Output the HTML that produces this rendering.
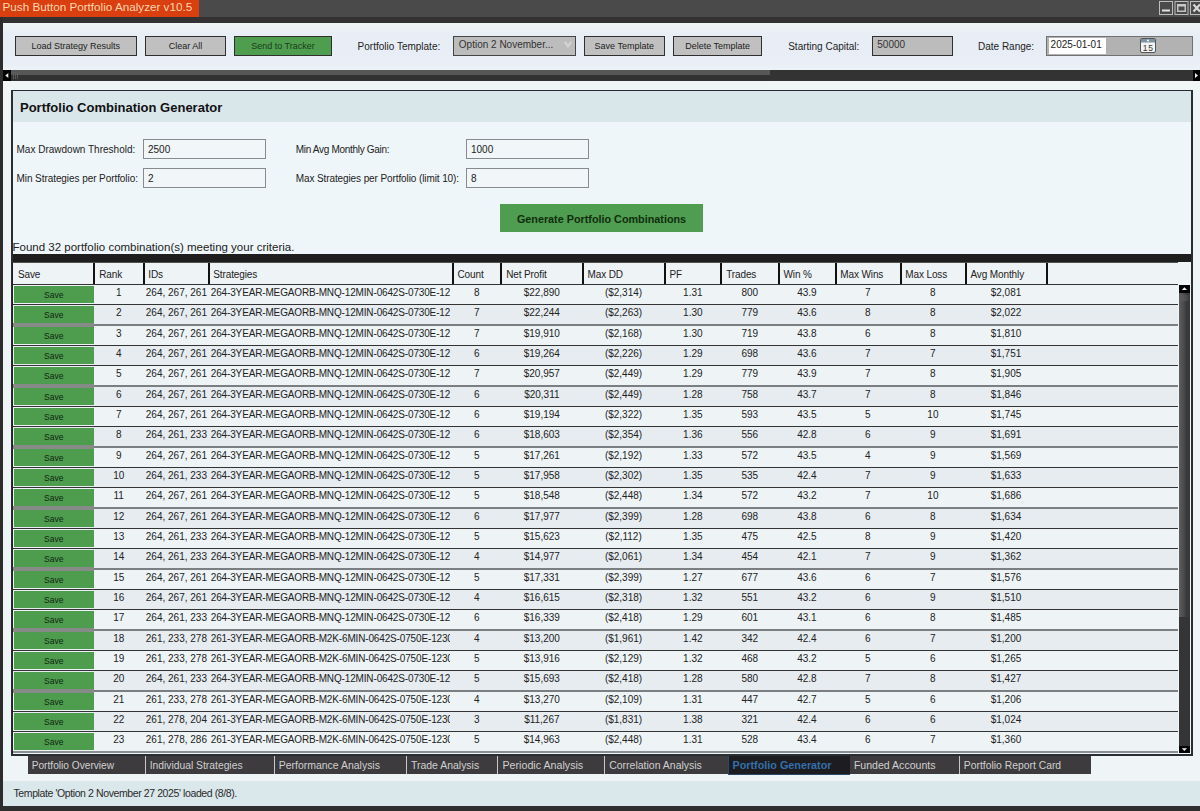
<!DOCTYPE html><html><head><meta charset="utf-8"><style>*{margin:0;padding:0;box-sizing:border-box}
html,body{width:1200px;height:811px;overflow:hidden;background:#eef4f6}
body{font-family:"Liberation Sans",sans-serif;color:#222}
#root{position:relative;width:1200px;height:811px;overflow:hidden;background:#eff5f6}
.a{position:absolute;white-space:nowrap}
#titlebar{position:absolute;left:0;top:0;width:1200px;height:17px;background:#4a4a4a}
#apptitle{position:absolute;left:0;top:0;width:199px;height:17px;background:#da3f10;color:#ffd5ae;font-size:11.7px;line-height:14.5px;padding-left:2.5px;white-space:nowrap}
#tband{position:absolute;left:0;top:17px;width:1200px;height:5.5px;background:#343133}
.wb{position:absolute;top:1.5px;width:13.5px;height:13.5px;border:1.5px solid #c8c8c8}
#lborder{position:absolute;left:0;top:17px;width:2.5px;height:794px;background:#2c2c2c}
#bborder{position:absolute;left:0;top:805.5px;width:1200px;height:6px;background:#2e2e2e}
.btn{position:absolute;top:36px;height:20px;background:#c0c0c0;border:1.5px solid #2f2f2f;font-size:9px;color:#222;text-align:center;line-height:19.5px;white-space:nowrap}
.btn.g{background:#4f9e4f;color:#1a3d1a}
.lbl{position:absolute;font-size:10px;color:#222;white-space:nowrap}
.hs{position:absolute;top:70px;height:10.8px;background:#333}
#panel{position:absolute;left:11px;top:89.5px;width:181.5px;height:666px;border:1.5px solid #2e2e2e}
.inp{position:absolute;height:20px;border:1.5px solid #858b8e;background:#f1f6f8;font-size:10px;line-height:19px;padding-left:4px;color:#222}
.thead{position:absolute;left:12.5px;top:263px;width:1178.5px;height:21.4px;background:#eef3f6}
.th{position:absolute;top:5.7px;font-size:10px;color:#222;white-space:nowrap;letter-spacing:-0.12px}
.vd{position:absolute;top:0;width:1.5px;height:21px;background:#111}
.thead .th,.thead .vd{margin-left:-12.5px}
.row{position:absolute;left:13px;width:1165px;height:19.33px;overflow:hidden}
.odd{background:#eef4f6}
.even{background:#e6ecf0}
.sv{position:absolute;left:1px;top:1px;width:79.5px;height:17px;background:#4e9c4e;color:#102810;font-weight:normal;font-size:8.5px;text-align:center;line-height:18px}
.td{position:absolute;top:2.1px;font-size:10px;color:#222;white-space:nowrap;overflow:hidden;line-height:12px;margin-left:-13px}
.td.c{text-align:center}
.hl{position:absolute;left:13px;width:1165px;height:1px;background:#333}
.tab{position:absolute;top:755.5px;height:18px;background:#3d3b3e;color:#d0d0d0;font-size:10.3px;line-height:19px;padding-left:5px;white-space:nowrap;border-left:1px solid #c8c8c8}
.tab.act{background:#1d1c20;color:#3470aa;font-weight:bold;font-size:10.8px;line-height:19px;height:19.5px;border-left:1px solid #2b4a6b;border-bottom:1px solid #2b4a6b}
.st{letter-spacing:-0.15px}
</style></head><body><div id="root"><div id="titlebar"></div>
<div id="apptitle">Push Button Portfolio Analyzer v10.5</div>
<svg class="a" style="left:1155px;top:0" width="45" height="17" viewBox="0 0 45 17">
<rect x="4.5" y="1.5" width="13" height="13" fill="none" stroke="#bdbdbd" stroke-width="1"/>
<rect x="7" y="9.5" width="8" height="2" fill="#e0e0e0"/>
<rect x="20" y="1.5" width="13" height="13" fill="none" stroke="#bdbdbd" stroke-width="1"/>
<rect x="22.75" y="4.75" width="7.5" height="6.5" fill="none" stroke="#c0c0c0" stroke-width="1.5"/>
<rect x="22" y="4" width="9" height="2.5" fill="#c8c8c8"/>
<rect x="35.5" y="1.5" width="13" height="13" fill="none" stroke="#bdbdbd" stroke-width="1"/>
<path d="M38.5 4.5 L45 11.5 M38.5 11.5 L45 4.5" stroke="#d8d8d8" stroke-width="2.2"/>
</svg>
<div id="tband"></div><div class="a" style="left:2.5px;top:22.5px;width:1197.5px;height:47.5px;background:linear-gradient(#f0f6f5 0px,#e8eef5 10px,#e8edf6 38px,#eef3f8 47px)"></div>
<div class="btn" style="left:14.6px;width:122.4px">Load Strategy Results</div>
<div class="btn" style="left:145px;width:81px">Clear All</div>
<div class="btn g" style="left:234px;width:98px">Send to Tracker</div>
<div class="lbl" style="left:357.6px;top:41px">Portfolio Template:</div>
<div class="btn" style="left:453.3px;width:122.5px;text-align:left;padding-left:4.5px;font-size:10px;line-height:15px;color:#333;top:35.8px;height:20px;border-color:#444;background:#bcbcbc">Option 2 November...</div><svg class="a" style="left:563px;top:39px" width="10" height="10"><path d="M1.8 2.8 L5 7.2 L8.2 2.8" fill="none" stroke="#d4d4d4" stroke-width="2"/></svg>
<div class="btn" style="left:584px;width:80.6px">Save Template</div>
<div class="btn" style="left:673px;width:89.4px">Delete Template</div>
<div class="lbl" style="left:788.2px;top:41px">Starting Capital:</div>
<div class="btn" style="left:871.8px;width:81.4px;text-align:left;padding-left:4.5px;font-size:10px;line-height:15px;color:#333;background:#bcbcbc">50000</div>
<div class="lbl" style="left:978px;top:41px">Date Range:</div>
<div class="a" style="left:1046px;top:36px;width:146.6px;height:19.6px;background:#b2b2b2;border:1px solid #707070"></div>
<div class="a" style="left:1048.6px;top:37.6px;width:57.4px;height:16px;background:#fff;font-size:10px;line-height:14px;padding-left:2px;color:#222">2025-01-01</div>
<svg class="a" style="left:1140px;top:38px" width="16" height="15" viewBox="0 0 16 15"><rect x="0.5" y="0.5" width="15" height="14" rx="1.5" fill="#f4f4f4" stroke="#555"/><rect x="1" y="1" width="14" height="3.5" fill="#7d93a3"/><circle cx="8" cy="2.5" r="1" fill="#fff"/><text x="8.2" y="12.6" font-family="Liberation Sans" font-size="8.5" text-anchor="middle" fill="#333" letter-spacing="0.6">15</text></svg>
<div class="hs" style="left:2.5px;width:1197.5px"></div>
<div class="a" style="left:11px;top:70px;width:759px;height:5.4px;background:#575757"></div>
<div class="a" style="left:11px;top:75.4px;width:759px;height:5.4px;background:#323232"></div>
<svg class="a" style="left:3px;top:70px" width="8" height="11"><rect width="8" height="11" fill="#000"/><path d="M2.3 5.5 L5.3 3 L5.3 8 Z" fill="#eee"/></svg><svg class="a" style="left:12px;top:71px" width="8" height="9"><path d="M1.5 1V8M3.5 1V8M5.5 1V8" stroke="#626262" stroke-width="0.8"/></svg>
<svg class="a" style="left:1192.8px;top:70px" width="7.2" height="11"><rect width="8" height="11" fill="#000"/><path d="M5 5.5 L2 3 L2 8 Z" fill="#eee"/></svg>
<div class="a" style="left:2.5px;top:80.8px;width:1197.5px;height:9px;background:#f0f6f6"></div>
<div class="a" style="left:11px;top:89.5px;width:1181.5px;height:666.5px;border:2px solid #2a2e33;background:#eff6f9"></div>
<div class="a" style="left:12.5px;top:91px;width:1178.5px;height:31px;background:#d9e7eb"></div>
<div class="a" style="left:20px;top:99.5px;font-size:13px;font-weight:bold;color:#111">Portfolio Combination Generator</div>
<div class="lbl" style="left:16.5px;top:144px">Max Drawdown Threshold:</div>
<div class="lbl" style="left:16.5px;top:173px;letter-spacing:-0.07px">Min Strategies per Portfolio:</div>
<div class="inp" style="left:143px;top:139.2px;width:123px">2500</div>
<div class="inp" style="left:143px;top:167.5px;width:123px">2</div>
<div class="lbl" style="left:295.7px;top:144px;letter-spacing:-0.3px">Min Avg Monthly Gain:</div>
<div class="lbl" style="left:295.7px;top:173px;letter-spacing:-0.1px">Max Strategies per Portfolio (limit 10):</div>
<div class="inp" style="left:466px;top:139.3px;width:122.7px">1000</div>
<div class="inp" style="left:466px;top:167.7px;width:122.7px">8</div>
<div class="a" style="left:500px;top:204px;width:203px;height:28.4px;background:#4f9d50;color:#0f2e0f;font-weight:bold;font-size:10.8px;line-height:30.5px;text-align:center">Generate Portfolio Combinations</div>
<div class="a" style="left:12.5px;top:241px;font-size:11.5px;color:#222">Found 32 portfolio combination(s) meeting your criteria.</div>
<div class="a" style="left:12.5px;top:254px;width:1178.5px;height:8px;background:#1e1e1e"></div>
<div class="a" style="left:12.5px;top:262px;width:1165.5px;height:1px;background:#505050"></div>
<div class="a" style="left:11.5px;top:263px;width:1.5px;height:491px;background:#222"></div>
<div class="thead"><span class="th" style="left:18.0px">Save</span><span class="th" style="left:99.2px">Rank</span><span class="th" style="left:148.3px">IDs</span><span class="th" style="left:213.3px">Strategies</span><span class="th" style="left:457.5px">Count</span><span class="th" style="left:506.2px">Net Profit</span><span class="th" style="left:587.5px">Max DD</span><span class="th" style="left:669.5px">PF</span><span class="th" style="left:726.2px">Trades</span><span class="th" style="left:783.5px">Win %</span><span class="th" style="left:840.3px">Max Wins</span><span class="th" style="left:905.3px">Max Loss</span><span class="th" style="left:970.5px">Avg Monthly</span><i class="vd" style="left:93px"></i><i class="vd" style="left:143px"></i><i class="vd" style="left:208px"></i><i class="vd" style="left:452px"></i><i class="vd" style="left:500px"></i><i class="vd" style="left:582px"></i><i class="vd" style="left:664px"></i><i class="vd" style="left:720px"></i><i class="vd" style="left:778px"></i><i class="vd" style="left:835px"></i><i class="vd" style="left:900px"></i><i class="vd" style="left:965px"></i><i class="vd" style="left:1046px"></i></div><div class="row odd" style="top:284.90px"><b class="sv">Save</b><span class="td c" style="left:94.2px;width:49.1px">1</span><span class="td l" style="left:145.8px;width:62.0px">264, 267, 261</span><span class="td l st" style="left:210.8px;width:239.5px">264-3YEAR-MEGAORB-MNQ-12MIN-0642S-0730E-12</span><span class="td c" style="left:452.5px;width:48.7px">8</span><span class="td c" style="left:501.2px;width:81.3px">$22,890</span><span class="td c" style="left:582.5px;width:82.0px">($2,314)</span><span class="td c" style="left:664.5px;width:56.7px">1.31</span><span class="td c" style="left:721.2px;width:57.3px">800</span><span class="td c" style="left:778.5px;width:56.8px">43.9</span><span class="td c" style="left:835.3px;width:65.0px">7</span><span class="td c" style="left:900.3px;width:65.2px">8</span><span class="td c" style="left:965.5px;width:81.0px">$2,081</span></div><div class="row even" style="top:305.23px"><b class="sv">Save</b><span class="td c" style="left:94.2px;width:49.1px">2</span><span class="td l" style="left:145.8px;width:62.0px">264, 267, 261</span><span class="td l st" style="left:210.8px;width:239.5px">264-3YEAR-MEGAORB-MNQ-12MIN-0642S-0730E-12</span><span class="td c" style="left:452.5px;width:48.7px">7</span><span class="td c" style="left:501.2px;width:81.3px">$22,244</span><span class="td c" style="left:582.5px;width:82.0px">($2,263)</span><span class="td c" style="left:664.5px;width:56.7px">1.30</span><span class="td c" style="left:721.2px;width:57.3px">779</span><span class="td c" style="left:778.5px;width:56.8px">43.6</span><span class="td c" style="left:835.3px;width:65.0px">8</span><span class="td c" style="left:900.3px;width:65.2px">8</span><span class="td c" style="left:965.5px;width:81.0px">$2,022</span></div><div class="row odd" style="top:325.57px"><b class="sv">Save</b><span class="td c" style="left:94.2px;width:49.1px">3</span><span class="td l" style="left:145.8px;width:62.0px">264, 267, 261</span><span class="td l st" style="left:210.8px;width:239.5px">264-3YEAR-MEGAORB-MNQ-12MIN-0642S-0730E-12</span><span class="td c" style="left:452.5px;width:48.7px">7</span><span class="td c" style="left:501.2px;width:81.3px">$19,910</span><span class="td c" style="left:582.5px;width:82.0px">($2,168)</span><span class="td c" style="left:664.5px;width:56.7px">1.30</span><span class="td c" style="left:721.2px;width:57.3px">719</span><span class="td c" style="left:778.5px;width:56.8px">43.8</span><span class="td c" style="left:835.3px;width:65.0px">6</span><span class="td c" style="left:900.3px;width:65.2px">8</span><span class="td c" style="left:965.5px;width:81.0px">$1,810</span></div><div class="row even" style="top:345.90px"><b class="sv">Save</b><span class="td c" style="left:94.2px;width:49.1px">4</span><span class="td l" style="left:145.8px;width:62.0px">264, 267, 261</span><span class="td l st" style="left:210.8px;width:239.5px">264-3YEAR-MEGAORB-MNQ-12MIN-0642S-0730E-12</span><span class="td c" style="left:452.5px;width:48.7px">6</span><span class="td c" style="left:501.2px;width:81.3px">$19,264</span><span class="td c" style="left:582.5px;width:82.0px">($2,226)</span><span class="td c" style="left:664.5px;width:56.7px">1.29</span><span class="td c" style="left:721.2px;width:57.3px">698</span><span class="td c" style="left:778.5px;width:56.8px">43.6</span><span class="td c" style="left:835.3px;width:65.0px">7</span><span class="td c" style="left:900.3px;width:65.2px">7</span><span class="td c" style="left:965.5px;width:81.0px">$1,751</span></div><div class="row odd" style="top:366.23px"><b class="sv">Save</b><span class="td c" style="left:94.2px;width:49.1px">5</span><span class="td l" style="left:145.8px;width:62.0px">264, 267, 261</span><span class="td l st" style="left:210.8px;width:239.5px">264-3YEAR-MEGAORB-MNQ-12MIN-0642S-0730E-12</span><span class="td c" style="left:452.5px;width:48.7px">7</span><span class="td c" style="left:501.2px;width:81.3px">$20,957</span><span class="td c" style="left:582.5px;width:82.0px">($2,449)</span><span class="td c" style="left:664.5px;width:56.7px">1.29</span><span class="td c" style="left:721.2px;width:57.3px">779</span><span class="td c" style="left:778.5px;width:56.8px">43.9</span><span class="td c" style="left:835.3px;width:65.0px">7</span><span class="td c" style="left:900.3px;width:65.2px">8</span><span class="td c" style="left:965.5px;width:81.0px">$1,905</span></div><div class="row even" style="top:386.56px"><b class="sv">Save</b><span class="td c" style="left:94.2px;width:49.1px">6</span><span class="td l" style="left:145.8px;width:62.0px">264, 267, 261</span><span class="td l st" style="left:210.8px;width:239.5px">264-3YEAR-MEGAORB-MNQ-12MIN-0642S-0730E-12</span><span class="td c" style="left:452.5px;width:48.7px">6</span><span class="td c" style="left:501.2px;width:81.3px">$20,311</span><span class="td c" style="left:582.5px;width:82.0px">($2,449)</span><span class="td c" style="left:664.5px;width:56.7px">1.28</span><span class="td c" style="left:721.2px;width:57.3px">758</span><span class="td c" style="left:778.5px;width:56.8px">43.7</span><span class="td c" style="left:835.3px;width:65.0px">7</span><span class="td c" style="left:900.3px;width:65.2px">8</span><span class="td c" style="left:965.5px;width:81.0px">$1,846</span></div><div class="row odd" style="top:406.90px"><b class="sv">Save</b><span class="td c" style="left:94.2px;width:49.1px">7</span><span class="td l" style="left:145.8px;width:62.0px">264, 267, 261</span><span class="td l st" style="left:210.8px;width:239.5px">264-3YEAR-MEGAORB-MNQ-12MIN-0642S-0730E-12</span><span class="td c" style="left:452.5px;width:48.7px">6</span><span class="td c" style="left:501.2px;width:81.3px">$19,194</span><span class="td c" style="left:582.5px;width:82.0px">($2,322)</span><span class="td c" style="left:664.5px;width:56.7px">1.35</span><span class="td c" style="left:721.2px;width:57.3px">593</span><span class="td c" style="left:778.5px;width:56.8px">43.5</span><span class="td c" style="left:835.3px;width:65.0px">5</span><span class="td c" style="left:900.3px;width:65.2px">10</span><span class="td c" style="left:965.5px;width:81.0px">$1,745</span></div><div class="row even" style="top:427.23px"><b class="sv">Save</b><span class="td c" style="left:94.2px;width:49.1px">8</span><span class="td l" style="left:145.8px;width:62.0px">264, 261, 233</span><span class="td l st" style="left:210.8px;width:239.5px">264-3YEAR-MEGAORB-MNQ-12MIN-0642S-0730E-12</span><span class="td c" style="left:452.5px;width:48.7px">6</span><span class="td c" style="left:501.2px;width:81.3px">$18,603</span><span class="td c" style="left:582.5px;width:82.0px">($2,354)</span><span class="td c" style="left:664.5px;width:56.7px">1.36</span><span class="td c" style="left:721.2px;width:57.3px">556</span><span class="td c" style="left:778.5px;width:56.8px">42.8</span><span class="td c" style="left:835.3px;width:65.0px">6</span><span class="td c" style="left:900.3px;width:65.2px">9</span><span class="td c" style="left:965.5px;width:81.0px">$1,691</span></div><div class="row odd" style="top:447.56px"><b class="sv">Save</b><span class="td c" style="left:94.2px;width:49.1px">9</span><span class="td l" style="left:145.8px;width:62.0px">264, 267, 261</span><span class="td l st" style="left:210.8px;width:239.5px">264-3YEAR-MEGAORB-MNQ-12MIN-0642S-0730E-12</span><span class="td c" style="left:452.5px;width:48.7px">5</span><span class="td c" style="left:501.2px;width:81.3px">$17,261</span><span class="td c" style="left:582.5px;width:82.0px">($2,192)</span><span class="td c" style="left:664.5px;width:56.7px">1.33</span><span class="td c" style="left:721.2px;width:57.3px">572</span><span class="td c" style="left:778.5px;width:56.8px">43.5</span><span class="td c" style="left:835.3px;width:65.0px">4</span><span class="td c" style="left:900.3px;width:65.2px">9</span><span class="td c" style="left:965.5px;width:81.0px">$1,569</span></div><div class="row even" style="top:467.90px"><b class="sv">Save</b><span class="td c" style="left:94.2px;width:49.1px">10</span><span class="td l" style="left:145.8px;width:62.0px">264, 261, 233</span><span class="td l st" style="left:210.8px;width:239.5px">264-3YEAR-MEGAORB-MNQ-12MIN-0642S-0730E-12</span><span class="td c" style="left:452.5px;width:48.7px">5</span><span class="td c" style="left:501.2px;width:81.3px">$17,958</span><span class="td c" style="left:582.5px;width:82.0px">($2,302)</span><span class="td c" style="left:664.5px;width:56.7px">1.35</span><span class="td c" style="left:721.2px;width:57.3px">535</span><span class="td c" style="left:778.5px;width:56.8px">42.4</span><span class="td c" style="left:835.3px;width:65.0px">7</span><span class="td c" style="left:900.3px;width:65.2px">9</span><span class="td c" style="left:965.5px;width:81.0px">$1,633</span></div><div class="row odd" style="top:488.23px"><b class="sv">Save</b><span class="td c" style="left:94.2px;width:49.1px">11</span><span class="td l" style="left:145.8px;width:62.0px">264, 267, 261</span><span class="td l st" style="left:210.8px;width:239.5px">264-3YEAR-MEGAORB-MNQ-12MIN-0642S-0730E-12</span><span class="td c" style="left:452.5px;width:48.7px">5</span><span class="td c" style="left:501.2px;width:81.3px">$18,548</span><span class="td c" style="left:582.5px;width:82.0px">($2,448)</span><span class="td c" style="left:664.5px;width:56.7px">1.34</span><span class="td c" style="left:721.2px;width:57.3px">572</span><span class="td c" style="left:778.5px;width:56.8px">43.2</span><span class="td c" style="left:835.3px;width:65.0px">7</span><span class="td c" style="left:900.3px;width:65.2px">10</span><span class="td c" style="left:965.5px;width:81.0px">$1,686</span></div><div class="row even" style="top:508.56px"><b class="sv">Save</b><span class="td c" style="left:94.2px;width:49.1px">12</span><span class="td l" style="left:145.8px;width:62.0px">264, 267, 261</span><span class="td l st" style="left:210.8px;width:239.5px">264-3YEAR-MEGAORB-MNQ-12MIN-0642S-0730E-12</span><span class="td c" style="left:452.5px;width:48.7px">6</span><span class="td c" style="left:501.2px;width:81.3px">$17,977</span><span class="td c" style="left:582.5px;width:82.0px">($2,399)</span><span class="td c" style="left:664.5px;width:56.7px">1.28</span><span class="td c" style="left:721.2px;width:57.3px">698</span><span class="td c" style="left:778.5px;width:56.8px">43.8</span><span class="td c" style="left:835.3px;width:65.0px">6</span><span class="td c" style="left:900.3px;width:65.2px">8</span><span class="td c" style="left:965.5px;width:81.0px">$1,634</span></div><div class="row odd" style="top:528.90px"><b class="sv">Save</b><span class="td c" style="left:94.2px;width:49.1px">13</span><span class="td l" style="left:145.8px;width:62.0px">264, 261, 233</span><span class="td l st" style="left:210.8px;width:239.5px">264-3YEAR-MEGAORB-MNQ-12MIN-0642S-0730E-12</span><span class="td c" style="left:452.5px;width:48.7px">5</span><span class="td c" style="left:501.2px;width:81.3px">$15,623</span><span class="td c" style="left:582.5px;width:82.0px">($2,112)</span><span class="td c" style="left:664.5px;width:56.7px">1.35</span><span class="td c" style="left:721.2px;width:57.3px">475</span><span class="td c" style="left:778.5px;width:56.8px">42.5</span><span class="td c" style="left:835.3px;width:65.0px">8</span><span class="td c" style="left:900.3px;width:65.2px">9</span><span class="td c" style="left:965.5px;width:81.0px">$1,420</span></div><div class="row even" style="top:549.23px"><b class="sv">Save</b><span class="td c" style="left:94.2px;width:49.1px">14</span><span class="td l" style="left:145.8px;width:62.0px">264, 261, 233</span><span class="td l st" style="left:210.8px;width:239.5px">264-3YEAR-MEGAORB-MNQ-12MIN-0642S-0730E-12</span><span class="td c" style="left:452.5px;width:48.7px">4</span><span class="td c" style="left:501.2px;width:81.3px">$14,977</span><span class="td c" style="left:582.5px;width:82.0px">($2,061)</span><span class="td c" style="left:664.5px;width:56.7px">1.34</span><span class="td c" style="left:721.2px;width:57.3px">454</span><span class="td c" style="left:778.5px;width:56.8px">42.1</span><span class="td c" style="left:835.3px;width:65.0px">7</span><span class="td c" style="left:900.3px;width:65.2px">9</span><span class="td c" style="left:965.5px;width:81.0px">$1,362</span></div><div class="row odd" style="top:569.56px"><b class="sv">Save</b><span class="td c" style="left:94.2px;width:49.1px">15</span><span class="td l" style="left:145.8px;width:62.0px">264, 267, 261</span><span class="td l st" style="left:210.8px;width:239.5px">264-3YEAR-MEGAORB-MNQ-12MIN-0642S-0730E-12</span><span class="td c" style="left:452.5px;width:48.7px">5</span><span class="td c" style="left:501.2px;width:81.3px">$17,331</span><span class="td c" style="left:582.5px;width:82.0px">($2,399)</span><span class="td c" style="left:664.5px;width:56.7px">1.27</span><span class="td c" style="left:721.2px;width:57.3px">677</span><span class="td c" style="left:778.5px;width:56.8px">43.6</span><span class="td c" style="left:835.3px;width:65.0px">6</span><span class="td c" style="left:900.3px;width:65.2px">7</span><span class="td c" style="left:965.5px;width:81.0px">$1,576</span></div><div class="row even" style="top:589.89px"><b class="sv">Save</b><span class="td c" style="left:94.2px;width:49.1px">16</span><span class="td l" style="left:145.8px;width:62.0px">264, 267, 261</span><span class="td l st" style="left:210.8px;width:239.5px">264-3YEAR-MEGAORB-MNQ-12MIN-0642S-0730E-12</span><span class="td c" style="left:452.5px;width:48.7px">4</span><span class="td c" style="left:501.2px;width:81.3px">$16,615</span><span class="td c" style="left:582.5px;width:82.0px">($2,318)</span><span class="td c" style="left:664.5px;width:56.7px">1.32</span><span class="td c" style="left:721.2px;width:57.3px">551</span><span class="td c" style="left:778.5px;width:56.8px">43.2</span><span class="td c" style="left:835.3px;width:65.0px">6</span><span class="td c" style="left:900.3px;width:65.2px">9</span><span class="td c" style="left:965.5px;width:81.0px">$1,510</span></div><div class="row odd" style="top:610.23px"><b class="sv">Save</b><span class="td c" style="left:94.2px;width:49.1px">17</span><span class="td l" style="left:145.8px;width:62.0px">264, 261, 233</span><span class="td l st" style="left:210.8px;width:239.5px">264-3YEAR-MEGAORB-MNQ-12MIN-0642S-0730E-12</span><span class="td c" style="left:452.5px;width:48.7px">6</span><span class="td c" style="left:501.2px;width:81.3px">$16,339</span><span class="td c" style="left:582.5px;width:82.0px">($2,418)</span><span class="td c" style="left:664.5px;width:56.7px">1.29</span><span class="td c" style="left:721.2px;width:57.3px">601</span><span class="td c" style="left:778.5px;width:56.8px">43.1</span><span class="td c" style="left:835.3px;width:65.0px">6</span><span class="td c" style="left:900.3px;width:65.2px">8</span><span class="td c" style="left:965.5px;width:81.0px">$1,485</span></div><div class="row even" style="top:630.56px"><b class="sv">Save</b><span class="td c" style="left:94.2px;width:49.1px">18</span><span class="td l" style="left:145.8px;width:62.0px">261, 233, 278</span><span class="td l st" style="left:210.8px;width:239.5px">261-3YEAR-MEGAORB-M2K-6MIN-0642S-0750E-1230</span><span class="td c" style="left:452.5px;width:48.7px">4</span><span class="td c" style="left:501.2px;width:81.3px">$13,200</span><span class="td c" style="left:582.5px;width:82.0px">($1,961)</span><span class="td c" style="left:664.5px;width:56.7px">1.42</span><span class="td c" style="left:721.2px;width:57.3px">342</span><span class="td c" style="left:778.5px;width:56.8px">42.4</span><span class="td c" style="left:835.3px;width:65.0px">6</span><span class="td c" style="left:900.3px;width:65.2px">7</span><span class="td c" style="left:965.5px;width:81.0px">$1,200</span></div><div class="row odd" style="top:650.89px"><b class="sv">Save</b><span class="td c" style="left:94.2px;width:49.1px">19</span><span class="td l" style="left:145.8px;width:62.0px">261, 233, 278</span><span class="td l st" style="left:210.8px;width:239.5px">261-3YEAR-MEGAORB-M2K-6MIN-0642S-0750E-1230</span><span class="td c" style="left:452.5px;width:48.7px">5</span><span class="td c" style="left:501.2px;width:81.3px">$13,916</span><span class="td c" style="left:582.5px;width:82.0px">($2,129)</span><span class="td c" style="left:664.5px;width:56.7px">1.32</span><span class="td c" style="left:721.2px;width:57.3px">468</span><span class="td c" style="left:778.5px;width:56.8px">43.2</span><span class="td c" style="left:835.3px;width:65.0px">5</span><span class="td c" style="left:900.3px;width:65.2px">6</span><span class="td c" style="left:965.5px;width:81.0px">$1,265</span></div><div class="row even" style="top:671.23px"><b class="sv">Save</b><span class="td c" style="left:94.2px;width:49.1px">20</span><span class="td l" style="left:145.8px;width:62.0px">264, 261, 233</span><span class="td l st" style="left:210.8px;width:239.5px">264-3YEAR-MEGAORB-MNQ-12MIN-0642S-0730E-12</span><span class="td c" style="left:452.5px;width:48.7px">5</span><span class="td c" style="left:501.2px;width:81.3px">$15,693</span><span class="td c" style="left:582.5px;width:82.0px">($2,418)</span><span class="td c" style="left:664.5px;width:56.7px">1.28</span><span class="td c" style="left:721.2px;width:57.3px">580</span><span class="td c" style="left:778.5px;width:56.8px">42.8</span><span class="td c" style="left:835.3px;width:65.0px">7</span><span class="td c" style="left:900.3px;width:65.2px">8</span><span class="td c" style="left:965.5px;width:81.0px">$1,427</span></div><div class="row odd" style="top:691.56px"><b class="sv">Save</b><span class="td c" style="left:94.2px;width:49.1px">21</span><span class="td l" style="left:145.8px;width:62.0px">261, 233, 278</span><span class="td l st" style="left:210.8px;width:239.5px">261-3YEAR-MEGAORB-M2K-6MIN-0642S-0750E-1230</span><span class="td c" style="left:452.5px;width:48.7px">4</span><span class="td c" style="left:501.2px;width:81.3px">$13,270</span><span class="td c" style="left:582.5px;width:82.0px">($2,109)</span><span class="td c" style="left:664.5px;width:56.7px">1.31</span><span class="td c" style="left:721.2px;width:57.3px">447</span><span class="td c" style="left:778.5px;width:56.8px">42.7</span><span class="td c" style="left:835.3px;width:65.0px">5</span><span class="td c" style="left:900.3px;width:65.2px">6</span><span class="td c" style="left:965.5px;width:81.0px">$1,206</span></div><div class="row even" style="top:711.89px"><b class="sv">Save</b><span class="td c" style="left:94.2px;width:49.1px">22</span><span class="td l" style="left:145.8px;width:62.0px">261, 278, 204</span><span class="td l st" style="left:210.8px;width:239.5px">261-3YEAR-MEGAORB-M2K-6MIN-0642S-0750E-1230</span><span class="td c" style="left:452.5px;width:48.7px">3</span><span class="td c" style="left:501.2px;width:81.3px">$11,267</span><span class="td c" style="left:582.5px;width:82.0px">($1,831)</span><span class="td c" style="left:664.5px;width:56.7px">1.38</span><span class="td c" style="left:721.2px;width:57.3px">321</span><span class="td c" style="left:778.5px;width:56.8px">42.4</span><span class="td c" style="left:835.3px;width:65.0px">6</span><span class="td c" style="left:900.3px;width:65.2px">6</span><span class="td c" style="left:965.5px;width:81.0px">$1,024</span></div><div class="row odd" style="top:732.23px"><b class="sv">Save</b><span class="td c" style="left:94.2px;width:49.1px">23</span><span class="td l" style="left:145.8px;width:62.0px">261, 278, 286</span><span class="td l st" style="left:210.8px;width:239.5px">261-3YEAR-MEGAORB-M2K-6MIN-0642S-0750E-1230</span><span class="td c" style="left:452.5px;width:48.7px">5</span><span class="td c" style="left:501.2px;width:81.3px">$14,963</span><span class="td c" style="left:582.5px;width:82.0px">($2,448)</span><span class="td c" style="left:664.5px;width:56.7px">1.31</span><span class="td c" style="left:721.2px;width:57.3px">528</span><span class="td c" style="left:778.5px;width:56.8px">43.4</span><span class="td c" style="left:835.3px;width:65.0px">6</span><span class="td c" style="left:900.3px;width:65.2px">7</span><span class="td c" style="left:965.5px;width:81.0px">$1,360</span></div><i class="hl" style="top:283.90px"></i><i class="hl" style="top:304.23px"></i><i class="hl" style="top:324.32px;height:1.5px;background:#7c7f82"></i><i class="hl" style="top:323.47px;height:3.2px;width:80.5px;background:#868b88"></i><i class="hl" style="top:344.90px"></i><i class="hl" style="top:365.23px"></i><i class="hl" style="top:385.31px;height:1.5px;background:#7c7f82"></i><i class="hl" style="top:384.46px;height:3.2px;width:80.5px;background:#868b88"></i><i class="hl" style="top:405.90px"></i><i class="hl" style="top:426.23px"></i><i class="hl" style="top:446.31px;height:1.5px;background:#7c7f82"></i><i class="hl" style="top:445.46px;height:3.2px;width:80.5px;background:#868b88"></i><i class="hl" style="top:466.90px"></i><i class="hl" style="top:487.23px"></i><i class="hl" style="top:507.31px;height:1.5px;background:#7c7f82"></i><i class="hl" style="top:506.46px;height:3.2px;width:80.5px;background:#868b88"></i><i class="hl" style="top:527.90px"></i><i class="hl" style="top:548.23px"></i><i class="hl" style="top:568.31px;height:1.5px;background:#7c7f82"></i><i class="hl" style="top:567.46px;height:3.2px;width:80.5px;background:#868b88"></i><i class="hl" style="top:588.89px"></i><i class="hl" style="top:609.23px"></i><i class="hl" style="top:629.31px;height:1.5px;background:#7c7f82"></i><i class="hl" style="top:628.46px;height:3.2px;width:80.5px;background:#868b88"></i><i class="hl" style="top:649.89px"></i><i class="hl" style="top:670.23px"></i><i class="hl" style="top:690.31px;height:1.5px;background:#7c7f82"></i><i class="hl" style="top:689.46px;height:3.2px;width:80.5px;background:#868b88"></i><i class="hl" style="top:710.89px"></i><i class="hl" style="top:731.23px"></i><div class="a" style="left:13px;top:751px;width:1165px;height:2px;background:#8a8f93"></div>
<div class="a" style="left:1179.2px;top:285.2px;width:10.8px;height:467.8px;background:#353535"></div>
<div class="a" style="left:1179.2px;top:293px;width:10.8px;height:324.4px;background:linear-gradient(90deg,#5e5e5e,#4a4a4a 45%,#383838 70%,#3a3a3a)"></div>
<svg class="a" style="left:1179.2px;top:285.2px" width="11" height="8"><rect width="11" height="8" fill="#000"/><path d="M5.4 2.3 L8 5 L2.8 5 Z" fill="#eee"/></svg><svg class="a" style="left:1180px;top:294px" width="9" height="8"><path d="M1 2H8M1 4H8M1 6H8" stroke="#626262" stroke-width="0.8"/></svg>
<svg class="a" style="left:1179.2px;top:746.2px" width="11" height="7"><rect width="11" height="7" fill="#000"/><path d="M5.4 5 L8 2.3 L2.8 2.3 Z" fill="#eee"/></svg>
<div class="tab" style="left:28px;width:117px;border-left:none;font-size:10.17px;padding-left:3.7px">Portfolio Overview</div>
<div class="tab" style="left:145px;width:129px;font-size:10.32px;padding-left:3.7px">Individual Strategies</div>
<div class="tab" style="left:274px;width:132px;font-size:10.47px;padding-left:3.7px">Performance Analysis</div>
<div class="tab" style="left:406px;width:91px;font-size:10.47px;padding-left:3.9px">Trade Analysis</div>
<div class="tab" style="left:497px;width:107px;font-size:10.68px;padding-left:4.5px">Periodic Analysis</div>
<div class="tab" style="left:604px;width:123.5px;font-size:10.49px;padding-left:4.2px">Correlation Analysis</div>
<div class="tab act" style="left:727.5px;width:122.5px;padding-left:4.0px">Portfolio Generator</div>
<div class="tab" style="left:850px;width:109px;border-left:none;font-size:10.57px;padding-left:3.9px">Funded Accounts</div>
<div class="tab" style="left:959px;width:132px;font-size:10.37px;padding-left:3.8px">Portfolio Report Card</div>
<div class="a" style="left:2.5px;top:780.5px;width:1197.5px;height:25px;background:#dae7eb"></div>
<div class="a" style="left:13.5px;top:786.8px;font-size:10.5px;letter-spacing:-0.4px;color:#2a2a2a">Template 'Option 2 November 27 2025' loaded (8/8).</div>
<div id="lborder"></div>
<div id="bborder"></div>
</div></body></html>
